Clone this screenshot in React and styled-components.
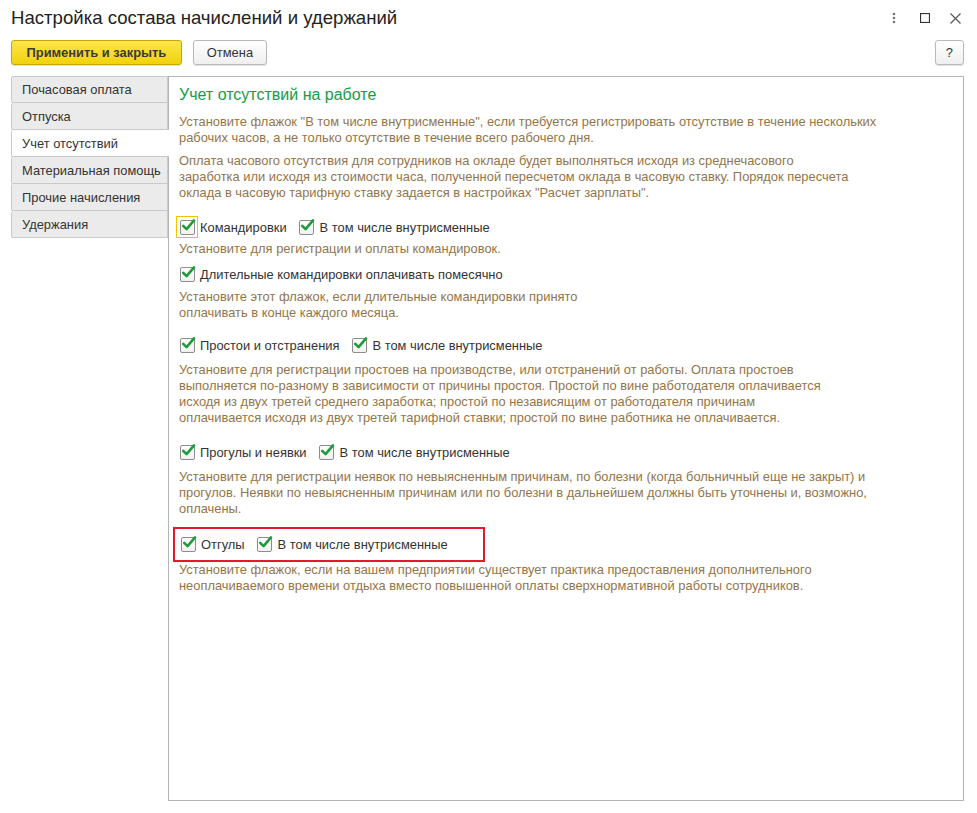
import React from 'react'
import styled, { createGlobalStyle } from 'styled-components'

const Global = createGlobalStyle`
  html, body { margin: 0; padding: 0; background: #fff; }
  body { font-family: "Liberation Sans", Arial, sans-serif; font-size: 12.9px; color: #333; }
`

const Window = styled.div`
  width: 977px;
  height: 813px;
  box-sizing: border-box;
  padding: 0 13px 0 11px;
  display: flex;
  flex-direction: column;
`

const TitleBar = styled.div`
  height: 36px;
  display: flex;
  align-items: center;
`

const Title = styled.div`
  flex: 1;
  font-size: 18.6px;
  color: #222;
`

const WinIcons = styled.div`
  display: flex;
  align-items: center;
  margin-right: -7px;
`

const WinIcon = styled.span`
  width: 31px;
  display: flex;
  justify-content: center;
  align-items: center;
`

const Toolbar = styled.div`
  margin-top: 4px;
  height: 25px;
  display: flex;
  align-items: center;
  gap: 11px;
`

const Button = styled.button`
  height: 25px;
  box-sizing: border-box;
  padding: 0 ${p => p.$pad || 12}px;
  border-radius: 3px;
  font-family: "Liberation Sans", Arial, sans-serif;
  font-size: 12.9px;
  font-weight: ${p => (p.$primary ? 'bold' : 'normal')};
  color: ${p => (p.$primary ? '#3b3b3b' : '#333')};
  border: 1px solid ${p => (p.$primary ? '#c7a600' : '#b9b9b9')};
  background: ${p =>
    p.$primary
      ? 'linear-gradient(#fbe54a, #f2d20c)'
      : 'linear-gradient(#ffffff, #efefef)'};
  box-shadow: 0 1px 1px rgba(0,0,0,0.12);
`

const Spacer = styled.div`flex: 1;`

const Main = styled.div`
  margin-top: 11px;
  display: flex;
  align-items: flex-start;
`

const TabList = styled.div`
  width: 157px;
  flex: none;
  display: flex;
  flex-direction: column;
`

const Tab = styled.div`
  height: 27px;
  box-sizing: border-box;
  display: flex;
  align-items: center;
  padding-left: 10px;
  color: #333;
  white-space: nowrap;
  overflow: hidden;
  background: ${p => (p.$active ? '#fff' : '#ebebeb')};
  border: 1px solid #c9c9c9;
  border-right: ${p => (p.$active ? 'none' : '1px solid #c9c9c9')};
  border-top: ${p => (p.$first ? '1px solid #c9c9c9' : 'none')};
  margin-right: ${p => (p.$active ? '-1px' : '0')};
  position: relative;
  z-index: ${p => (p.$active ? 1 : 0)};
  border-radius: 2px 0 0 2px;
`

const Panel = styled.div`
  flex: 1;
  height: 725px;
  box-sizing: border-box;
  border: 1px solid #b5b5b5;
  padding: 8px 10px 0 10px;
`

const SectionTitle = styled.div`
  font-size: 16px;
  line-height: 20px;
  color: #169c48;
`

const Note = styled.div`
  margin-top: ${p => p.$mt || 0}px;
  line-height: 16px;
  color: #937549;
  white-space: nowrap;
`

const Row = styled.div`
  margin-top: ${p => p.$mt || 0}px;
  height: 22px;
  display: flex;
  align-items: center;
  gap: 12px;
`

const Highlight = styled.div`
  margin-top: ${p => p.$mt || 0}px;
  margin-left: -6px;
  width: 312px;
  height: 35px;
  box-sizing: border-box;
  border: 2px solid #e21b2a;
  display: flex;
  align-items: center;
  padding-left: 5px;
  gap: 12px;
`

const Check = styled.label`
  display: flex;
  align-items: center;
  gap: 4px;
  color: #333;
  white-space: nowrap;
`

const BoxWrap = styled.span`
  width: 22px;
  height: 22px;
  box-sizing: border-box;
  display: flex;
  align-items: center;
  justify-content: center;
  margin: 0 -2px 0 -3px;
  border: 1px solid ${p => (p.$focus ? '#f2c200' : 'transparent')};
`

const Box = styled.span`
  width: 15px;
  height: 15px;
  box-sizing: border-box;
  border: 1px solid #8d8d8d;
  border-radius: 2px;
  background: linear-gradient(#fff, #f1f1f1);
  position: relative;
`

const Tick = () => (
  <svg width="15" height="14" viewBox="0 0 15 14" style={{ position: 'absolute', left: 0, top: -3 }}>
    <path d="M2.2 7.8 L5.6 11.2 L13 2.4" fill="none" stroke="#1f9b3b" strokeWidth="2.6" strokeLinecap="round" strokeLinejoin="round" />
  </svg>
)

const CheckBox = ({ label, focus }) => (
  <Check>
    <BoxWrap $focus={focus}>
      <Box><Tick /></Box>
    </BoxWrap>
    {label}
  </Check>
)

const Lines = ({ lines, mt }) => (
  <Note $mt={mt}>
    {lines.map((l, i) => (
      <div key={i}>{l}</div>
    ))}
  </Note>
)

const tabs = [
  'Почасовая оплата',
  'Отпуска',
  'Учет отсутствий',
  'Материальная помощь',
  'Прочие начисления',
  'Удержания',
]

export default function App() {
  return (
    <Window>
      <Global />
      <TitleBar>
        <Title>Настройка состава начислений и удержаний</Title>
        <WinIcons>
          <WinIcon>
            <svg width="4" height="12" viewBox="0 0 4 12">
              <circle cx="2" cy="2" r="1.3" fill="#777" />
              <circle cx="2" cy="6" r="1.3" fill="#777" />
              <circle cx="2" cy="10" r="1.3" fill="#777" />
            </svg>
          </WinIcon>
          <WinIcon>
            <svg width="10" height="10" viewBox="0 0 10 10">
              <rect x="0.5" y="0.5" width="9" height="9" fill="none" stroke="#333" strokeWidth="1.2" />
            </svg>
          </WinIcon>
          <WinIcon>
            <svg width="11" height="11" viewBox="0 0 11 11">
              <path d="M0.5 0.5 L10.5 10.5 M10.5 0.5 L0.5 10.5" stroke="#555" strokeWidth="1.2" />
            </svg>
          </WinIcon>
        </WinIcons>
      </TitleBar>
      <Toolbar>
        <Button $primary $pad={14.5}>Применить и закрыть</Button>
        <Button $pad={13}>Отмена</Button>
        <Spacer />
        <Button $pad={10}>?</Button>
      </Toolbar>
      <Main>
        <TabList>
          {tabs.map((t, i) => (
            <Tab key={t} $first={i === 0} $active={i === 2}>{t}</Tab>
          ))}
        </TabList>
        <Panel>
          <SectionTitle>Учет отсутствий на работе</SectionTitle>
          <Lines
            mt={9}
            lines={[
              'Установите флажок "В том числе внутрисменные", если требуется регистрировать отсутствие в течение нескольких',
              'рабочих часов, а не только отсутствие в течение всего рабочего дня.',
            ]}
          />
          <Lines
            mt={7}
            lines={[
              'Оплата часового отсутствия для сотрудников на окладе будет выполняться исходя из среднечасового',
              'заработка или исходя из стоимости часа, полученной пересчетом оклада в часовую ставку. Порядок пересчета',
              'оклада в часовую тарифную ставку задается в настройках "Расчет зарплаты".',
            ]}
          />
          <Row $mt={15}>
            <CheckBox label="Командировки" focus />
            <CheckBox label="В том числе внутрисменные" />
          </Row>
          <Lines mt={3} lines={['Установите для регистрации и оплаты командировок.']} />
          <Row $mt={6}>
            <CheckBox label="Длительные командировки оплачивать помесячно" />
          </Row>
          <Lines
            mt={4}
            lines={[
              'Установите этот флажок, если длительные командировки принято',
              'оплачивать в конце каждого месяца.',
            ]}
          />
          <Row $mt={13}>
            <CheckBox label="Простои и отстранения" />
            <CheckBox label="В том числе внутрисменные" />
          </Row>
          <Lines
            mt={6}
            lines={[
              'Установите для регистрации простоев на производстве, или отстранений от работы. Оплата простоев',
              'выполняется по-разному в зависимости от причины простоя. Простой по вине работодателя оплачивается',
              'исходя из двух третей среднего заработка; простой по независящим от работодателя причинам',
              'оплачивается исходя из двух третей тарифной ставки; простой по вине работника не оплачивается.',
            ]}
          />
          <Row $mt={15}>
            <CheckBox label="Прогулы и неявки" />
            <CheckBox label="В том числе внутрисменные" />
          </Row>
          <Lines
            mt={6}
            lines={[
              'Установите для регистрации неявок по невыясненным причинам, по болезни (когда больничный еще не закрыт) и',
              'прогулов. Неявки по невыясненным причинам или по болезни в дальнейшем должны быть уточнены и, возможно,',
              'оплачены.',
            ]}
          />
          <Highlight $mt={10}>
            <CheckBox label="Отгулы" />
            <CheckBox label="В том числе внутрисменные" />
          </Highlight>
          <Lines
            mt={0}
            lines={[
              'Установите флажок, если на вашем предприятии существует практика предоставления дополнительного',
              'неоплачиваемого времени отдыха вместо повышенной оплаты сверхнормативной работы сотрудников.',
            ]}
          />
        </Panel>
      </Main>
    </Window>
  )
}
